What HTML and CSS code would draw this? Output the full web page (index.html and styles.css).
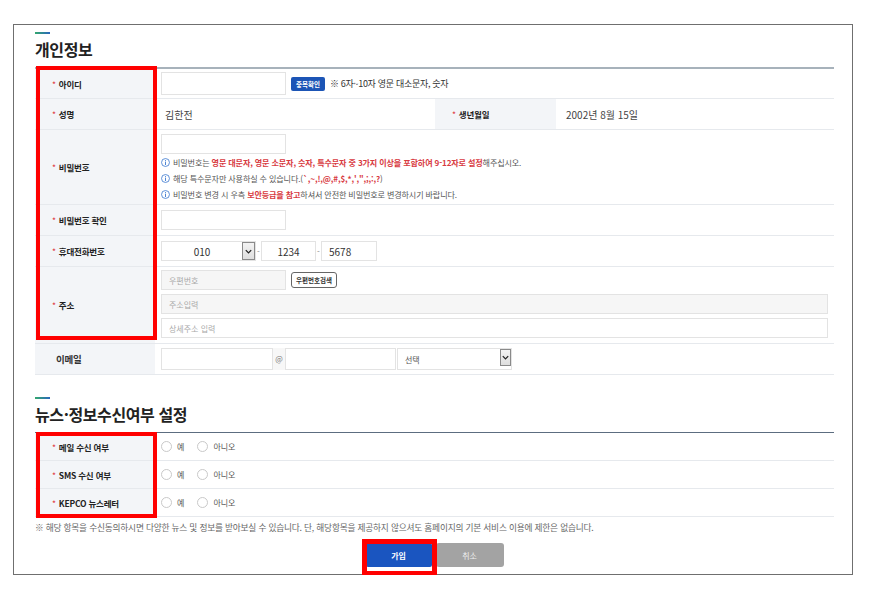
FILE: index.html
```html
<!DOCTYPE html>
<html lang="ko">
<head>
    <meta charset="UTF-8">
    <meta name="viewport" content="width=device-width, initial-scale=1.0">
    <title>회원가입 - 개인정보</title>
    <link rel="stylesheet" href="styles.css">
</head>
<body>
    <div class="page">
        <div class="frame">
            <div class="section-bar"></div>
            <h2 class="section-title">개인정보</h2>

            <div class="form-table">
                <div class="row r30">
                    <div class="th"><span class="req">*</span>아이디</div>
                    <div class="td">
                        <input class="input w125 tall" type="text">
                        <button class="btn-check" type="button">중복확인</button>
                        <span class="hint">※ 6자~10자 영문 대소문자, 숫자</span>
                    </div>
                </div>

                <div class="row split r31">
                    <div class="th"><span class="req">*</span>성명</div>
                    <div class="td value">김한전</div>
                    <div class="th"><span class="req">*</span>생년월일</div>
                    <div class="td value">2002년 8월 15일</div>
                </div>

                <div class="row r75">
                    <div class="th"><span class="req">*</span>비밀번호</div>
                    <div class="td stack pw">
                        <input class="input w125" type="password">
                        <p class="note">
                            <svg class="info" width="9" height="9" viewBox="0 0 10 10"><circle cx="5" cy="5" r="4.4" fill="none" stroke="#3b78cf" stroke-width="0.9"/><rect x="4.5" y="2.2" width="1" height="1" fill="#3b78cf"/><rect x="4.5" y="4" width="1" height="3.8" fill="#3b78cf"/></svg>
                            <span>비밀번호는 <b class="red">영문 대문자, 영문 소문자, 숫자, 특수문자 중 3가지 이상을 포함하여 9-12자로 설정</b>해주십시오.</span>
                        </p>
                        <p class="note">
                            <svg class="info" width="9" height="9" viewBox="0 0 10 10"><circle cx="5" cy="5" r="4.4" fill="none" stroke="#3b78cf" stroke-width="0.9"/><rect x="4.5" y="2.2" width="1" height="1" fill="#3b78cf"/><rect x="4.5" y="4" width="1" height="3.8" fill="#3b78cf"/></svg>
                            <span>해당 특수문자만 사용하실 수 있습니다.(<b class="red">`,~,!,@,#,$,*,',",;,:,?</b>)</span>
                        </p>
                        <p class="note">
                            <svg class="info" width="9" height="9" viewBox="0 0 10 10"><circle cx="5" cy="5" r="4.4" fill="none" stroke="#3b78cf" stroke-width="0.9"/><rect x="4.5" y="2.2" width="1" height="1" fill="#3b78cf"/><rect x="4.5" y="4" width="1" height="3.8" fill="#3b78cf"/></svg>
                            <span>비밀번호 변경 시 우측 <b class="red">보안등급을 참고</b>하셔서 안전한 비밀번호로 변경하시기 바랍니다.</span>
                        </p>
                    </div>
                </div>

                <div class="row r31">
                    <div class="th"><span class="req">*</span>비밀번호 확인</div>
                    <div class="td">
                        <input class="input w125" type="password">
                    </div>
                </div>

                <div class="row r31">
                    <div class="th"><span class="req">*</span>휴대전화번호</div>
                    <div class="td phone">
                        <div class="select w95">
                            <span class="select-text center">010</span>
                            <span class="select-arrow"><svg width="9" height="9" viewBox="0 0 10 10"><path d="M2 3.5 L5 6.5 L8 3.5" fill="none" stroke="#222" stroke-width="1.4"/></svg></span>
                        </div>
                        <span class="dash">-</span>
                        <input class="input num w55 center" type="text" value="1234">
                        <span class="dash">-</span>
                        <input class="input num w56" type="text" value="5678">
                    </div>
                </div>

                <div class="row r77">
                    <div class="th"><span class="req">*</span>주소</div>
                    <div class="td stack addr">
                        <div class="addr-line">
                            <input class="input w125 gray" type="text" placeholder="우편번호">
                            <button class="btn-zip" type="button">우편번호검색</button>
                        </div>
                        <input class="input full gray" type="text" placeholder="주소입력">
                        <input class="input full" type="text" placeholder="상세주소 입력">
                    </div>
                </div>

                <div class="row r31">
                    <div class="th th-plain">이메일</div>
                    <div class="td email">
                        <input class="input w112 h22" type="text">
                        <span class="at">@</span>
                        <input class="input w111 h22" type="text">
                        <div class="select w115 h22">
                            <span class="select-text">선택</span>
                            <span class="select-arrow short"><svg width="9" height="9" viewBox="0 0 10 10"><path d="M2 3.5 L5 6.5 L8 3.5" fill="none" stroke="#222" stroke-width="1.4"/></svg></span>
                        </div>
                    </div>
                </div>
            </div>

            <div class="section-bar second"></div>
            <h2 class="section-title">뉴스·정보수신여부 설정</h2>

            <div class="form-table dark">
                <div class="row r28">
                    <div class="th"><span class="req">*</span>메일 수신 여부</div>
                    <div class="td radios">
                        <label><input type="radio" name="mail"> 예</label>
                        <label><input type="radio" name="mail"> 아니오</label>
                    </div>
                </div>
                <div class="row r28">
                    <div class="th"><span class="req">*</span>SMS 수신 여부</div>
                    <div class="td radios">
                        <label><input type="radio" name="sms"> 예</label>
                        <label><input type="radio" name="sms"> 아니오</label>
                    </div>
                </div>
                <div class="row r28">
                    <div class="th"><span class="req">*</span>KEPCO 뉴스레터</div>
                    <div class="td radios">
                        <label><input type="radio" name="news"> 예</label>
                        <label><input type="radio" name="news"> 아니오</label>
                    </div>
                </div>
            </div>

            <p class="bottom-note">※ 해당 항목을 수신동의하시면 다양한 뉴스 및 정보를 받아보실 수 있습니다. 단, 해당항목을 제공하지 않으셔도 홈페이지의 기본 서비스 이용에 제한은 없습니다.</p>

            <div class="actions">
                <button class="btn-join" type="button">가입</button>
                <button class="btn-cancel" type="button">취소</button>
            </div>

            <!-- annotation boxes -->
            <div class="mark mark-info"></div>
            <div class="mark mark-news"></div>
            <div class="mark mark-join"></div>
        </div>
    </div>
</body>
</html>
```

FILE: styles.css
```css
* {
    margin: 0;
    padding: 0;
    box-sizing: border-box;
}

body {
    background-color: #fff;
    font-family: "Noto Sans CJK KR", "Noto Sans", sans-serif;
    color: #333;
}

.page {
    padding: 24px 0 0 13px;
}

.frame {
    position: relative;
    width: 840px;
    height: 551px;
    border: 1px solid #6f6f6f;
    padding: 7px 18px 0 21px;
}

.section-bar {
    width: 15px;
    height: 2px;
    background: linear-gradient(to right, #34a86e, #2a66bd);
}

.section-bar.second {
    margin-top: 22px;
}

.section-title {
    font-size: 16px;
    font-weight: bold;
    color: #222;
    line-height: 24px;
    margin: 3px 0 6px;
    letter-spacing: -0.4px;
}

.form-table {
    border-top: 2px solid #a7b2bb;
}

.form-table.dark {
    border-top: 1px solid #5c6d80;
}

.row {
    display: grid;
    grid-template-columns: 120px 1fr;
    border-bottom: 1px solid #e6e9ed;
}

.row.split {
    grid-template-columns: 120px 280px 121px 1fr;
}

.r28 { height: 28px; }
.r30 { height: 30px; }
.r31 { height: 31px; }
.r75 { height: 75px; }
.r77 { height: 77px; }

.th {
    display: flex;
    align-items: center;
    padding-left: 17px;
    background-color: #f3f5f8;
    font-size: 8.5px;
    font-weight: bold;
    color: #222;
    letter-spacing: -0.2px;
}

.th-plain {
    padding-left: 21px;
    font-size: 9.5px;
    color: #333;
}

.th .req {
    color: #e0393e;
    margin-right: 3px;
    font-weight: normal;
}

.td {
    display: flex;
    align-items: center;
    padding: 0 6px;
    gap: 5px;
    font-size: 8px;
}

.td.value {
    font-size: 10px;
    color: #444;
    padding-left: 10px;
}

.td.stack {
    flex-direction: column;
    align-items: flex-start;
    justify-content: flex-start;
}

.td.pw {
    padding-top: 4px;
    gap: 0;
}

.td.addr {
    padding-top: 3px;
    gap: 4px;
}

.addr-line {
    display: flex;
    align-items: center;
    gap: 5px;
}

.input {
    height: 20px;
    border: 1px solid #e3e3e3;
    background-color: #fff;
    font-family: inherit;
    font-size: 8px;
    color: #333;
    padding: 0 7px;
    outline: none;
}

.input::placeholder {
    color: #a9a9a9;
}

.input.gray {
    background-color: #f6f6f6;
}

.input.tall { height: 23px; }
.h22 { height: 22px !important; }
.input.num { font-size: 10px; }
.center { text-align: center; }

.w55 { width: 55px; }
.w56 { width: 56px; }
.w95 { width: 95px; }
.w111 { width: 111px; }
.w112 { width: 112px; }
.w115 { width: 115px; }
.w125 { width: 125px; }
.full { width: 667px; }

.btn-check {
    height: 14px;
    padding: 0 5px;
    background-color: #1c55b6;
    color: #fff;
    border: none;
    border-radius: 2px;
    font-family: inherit;
    font-size: 6.5px;
    font-weight: bold;
}

.hint {
    font-size: 9px;
    color: #333;
    letter-spacing: -0.3px;
}

.note {
    display: flex;
    align-items: center;
    gap: 3px;
    height: 16px;
    font-size: 8.1px;
    color: #555;
    letter-spacing: -0.15px;
    white-space: nowrap;
}

.info {
    flex-shrink: 0;
}

.red {
    color: #d83a3f;
    font-weight: bold;
}

.phone {
    gap: 0;
}

.dash {
    width: 5px;
    text-align: center;
    color: #888;
    font-size: 8px;
}

.select {
    display: flex;
    align-items: center;
    height: 20px;
    border: 1px solid #e3e3e3;
    background-color: #fff;
}

.select-text {
    flex: 1;
    padding-left: 7px;
    font-size: 8px;
    color: #555;
}

.select-text.center {
    padding-left: 0;
    text-align: center;
    font-size: 10px;
    color: #333;
}

.select-arrow {
    display: flex;
    align-items: center;
    justify-content: center;
    width: 13px;
    height: 100%;
    background: linear-gradient(#f3f3f3, #dedede);
    border: 1px solid #8a8a8a;
}

.select-arrow.short {
    width: 11px;
    height: 17px;
    align-self: flex-start;
}

.email {
    gap: 0;
}

.at {
    width: 12px;
    height: 22px;
    line-height: 22px;
    text-align: center;
    font-size: 8px;
    color: #777;
    background-color: #f7f7f7;
}

.email .select {
    margin-left: 1px;
}

.btn-zip {
    height: 16px;
    padding: 0 4px;
    background-color: #fff;
    border: 1px solid #666;
    border-radius: 3px;
    font-family: inherit;
    font-size: 6.5px;
    font-weight: bold;
    color: #333;
}

.radios {
    gap: 13px;
}

.radios label {
    display: flex;
    align-items: center;
    gap: 5px;
    font-size: 8px;
    color: #555;
}

.radios input {
    appearance: none;
    width: 11px;
    height: 11px;
    border: 1px solid #c9c9c9;
    border-radius: 50%;
    background-color: #fff;
}

.bottom-note {
    margin-top: 4px;
    line-height: 14px;
    font-size: 8.7px;
    color: #666;
    letter-spacing: -0.2px;
    white-space: nowrap;
}

.actions {
    display: flex;
    justify-content: center;
    gap: 4px;
    margin-top: 8px;
}

.btn-join,
.btn-cancel {
    height: 24px;
    border: none;
    border-radius: 2px;
    font-family: inherit;
    font-size: 8px;
    color: #fff;
}

.btn-join {
    width: 66px;
    background-color: #1a55c0;
    font-weight: bold;
}

.btn-cancel {
    width: 68px;
    background-color: #a3a3a3;
    border-radius: 3px;
    color: #eee;
}

.mark {
    position: absolute;
    border: 4px solid #ff0000;
}

.mark-info {
    left: 22px;
    top: 41px;
    width: 121px;
    height: 274px;
}

.mark-news {
    left: 22px;
    top: 407px;
    width: 121px;
    height: 86px;
}

.mark-join {
    left: 348px;
    top: 514px;
    width: 75px;
    height: 37px;
    border-width: 5px;
}
```
